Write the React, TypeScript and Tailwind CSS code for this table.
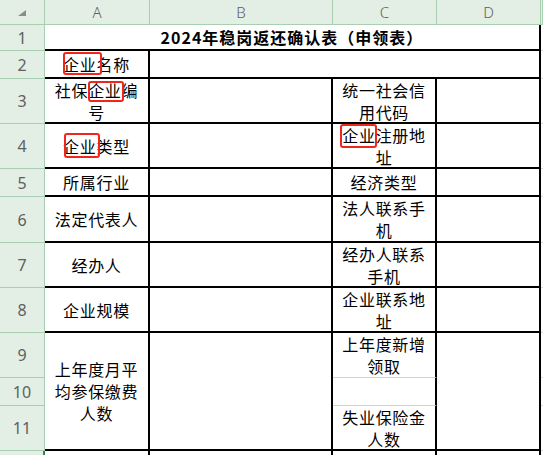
import React from 'react';

const hdr = "flex items-center justify-center bg-[#e3efe4] border-r border-b border-[#a9cfb2] text-[#606060] font-['Noto_Sans',sans-serif]";
const rowHdr = `${hdr} text-[16px]`;
const colHdr = `${hdr} text-[15px] font-light`;
const cell = "flex items-center justify-center text-center border-black text-[16px] leading-[22px] tracking-[0.7px] text-black";
const blank = "border-b border-[#d3ddd5]";

// red hand-drawn box around a word
const Mark: React.FC<{ box: string; children: React.ReactNode }> = ({ box, children }) => (
  <span className="relative inline-block">
    {children}
    <span className={`absolute border-2 border-[#f0261c] rounded-[3px] ${box}`} />
  </span>
);

export default function App() {
  return (
    <div className="w-[543px] h-[455px] overflow-hidden bg-white font-['Noto_Sans_CJK_SC',sans-serif]">
      <div className="grid grid-cols-[45px_105px_183px_104px_104px_1fr] grid-rows-[25px_26px_28px_45px_45px_28px_46px_45px_45px_45px_28px_45px_45px]">
        {/* column headers */}
        <div className={`${hdr} !items-start !justify-start pl-[18px] pt-[10px]`}>
          <svg width="8" height="6" viewBox="0 0 8 6">
            <polygon points="0,6 8,6 8,0" fill="#8c8c8c" />
          </svg>
        </div>
        <div className={colHdr}>A</div>
        <div className={colHdr}>B</div>
        <div className={colHdr}>C</div>
        <div className={colHdr}>D</div>
        <div className={colHdr}></div>

        {/* 1 */}
        <div className={rowHdr}>1</div>
        <div className={`${cell} col-span-4 border-r-2 border-b-2 font-bold tracking-[1px]`}>
          2024年稳岗返还确认表（申领表）
        </div>
        <div className={blank}></div>

        {/* 2 */}
        <div className={rowHdr}>2</div>
        <div className={`${cell} border-r-2 border-b-2`}>
          <span>
            <Mark box="-left-[0px] -right-[5px] -top-[1px] bottom-0">企业</Mark>名称
          </span>
        </div>
        <div className={`${cell} col-span-3 border-r-2 border-b-2`}></div>
        <div className={blank}></div>

        {/* 3 */}
        <div className={rowHdr}>3</div>
        <div className={`${cell} border-r-2 border-b-2`}>
          <span>
            社保<Mark box="left-0 -right-[2px] top-[2px] -bottom-[1px]">企业</Mark>编<br />号
          </span>
        </div>
        <div className={`${cell} border-r-2 border-b-2`}></div>
        <div className={`${cell} border-r-2 border-b-2`}>
          <span>统一社会信<br />用代码</span>
        </div>
        <div className={`${cell} border-r-2 border-b-2`}></div>
        <div className={blank}></div>

        {/* 4 */}
        <div className={rowHdr}>4</div>
        <div className={`${cell} border-r-2 border-b-2`}>
          <span>
            <Mark box="left-[1px] -right-[3px] -top-[2px] -bottom-[1px]">企业</Mark>类型
          </span>
        </div>
        <div className={`${cell} border-r-2 border-b-2`}></div>
        <div className={`${cell} border-r-2 border-b-2`}>
          <span>
            <Mark box="-left-[2px] -right-[1px] top-0 -bottom-[2px]">企业</Mark>注册地<br />址
          </span>
        </div>
        <div className={`${cell} border-r-2 border-b-2`}></div>
        <div className={blank}></div>

        {/* 5 */}
        <div className={rowHdr}>5</div>
        <div className={`${cell} border-r-2 border-b-2`}>所属行业</div>
        <div className={`${cell} border-r-2 border-b-2`}></div>
        <div className={`${cell} border-r-2 border-b-2`}>经济类型</div>
        <div className={`${cell} border-r-2 border-b-2`}></div>
        <div className={blank}></div>

        {/* 6 */}
        <div className={rowHdr}>6</div>
        <div className={`${cell} border-r-2 border-b-2`}>法定代表人</div>
        <div className={`${cell} border-r-2 border-b-2`}></div>
        <div className={`${cell} border-r-2 border-b-2`}>
          <span>法人联系手<br />机</span>
        </div>
        <div className={`${cell} border-r-2 border-b-2`}></div>
        <div className={blank}></div>

        {/* 7 */}
        <div className={rowHdr}>7</div>
        <div className={`${cell} border-r-2 border-b-2`}>经办人</div>
        <div className={`${cell} border-r-2 border-b-2`}></div>
        <div className={`${cell} border-r-2 border-b-2`}>
          <span>经办人联系<br />手机</span>
        </div>
        <div className={`${cell} border-r-2 border-b-2`}></div>
        <div className={blank}></div>

        {/* 8 */}
        <div className={rowHdr}>8</div>
        <div className={`${cell} border-r-2 border-b-2`}>企业规模</div>
        <div className={`${cell} border-r-2 border-b-2`}></div>
        <div className={`${cell} border-r-2 border-b-2`}>
          <span>企业联系地<br />址</span>
        </div>
        <div className={`${cell} border-r-2 border-b-2`}></div>
        <div className={blank}></div>

        {/* 9 - 11 */}
        <div className={rowHdr}>9</div>
        <div className={`${cell} row-span-3 border-r-2 border-b-2`}>
          <span>上年度月平<br />均参保缴费<br />人数</span>
        </div>
        <div className={`${cell} row-span-3 border-r-2 border-b-2`}></div>
        <div className={`${cell} border-r-2 border-b border-b-[#c3dcc9]`}>
          <span>上年度新增<br />领取</span>
        </div>
        <div className={`${cell} row-span-3 border-r-2 border-b-2`}></div>
        <div className={blank}></div>

        <div className={rowHdr}>10</div>
        <div className={`${cell} border-r-2 border-b border-b-[#c3dcc9]`}></div>
        <div className={blank}></div>

        <div className={rowHdr}>11</div>
        <div className={`${cell} border-r-2 border-b-2`}>
          <span>失业保险金<br />人数</span>
        </div>
        <div className={blank}></div>

        {/* 12 */}
        <div className={`${rowHdr} bg-[#cbe3cf] border-r-2 border-r-[#2f8a4a]`}>12</div>
        <div className={`${cell} border-r-2`}></div>
        <div className={`${cell} border-r-2`}></div>
        <div className={`${cell} border-r-2`}>
          <span>企业开户银<br />行</span>
        </div>
        <div className={`${cell} border-r-2`}></div>
        <div className={blank}></div>
      </div>
    </div>
  );
}
